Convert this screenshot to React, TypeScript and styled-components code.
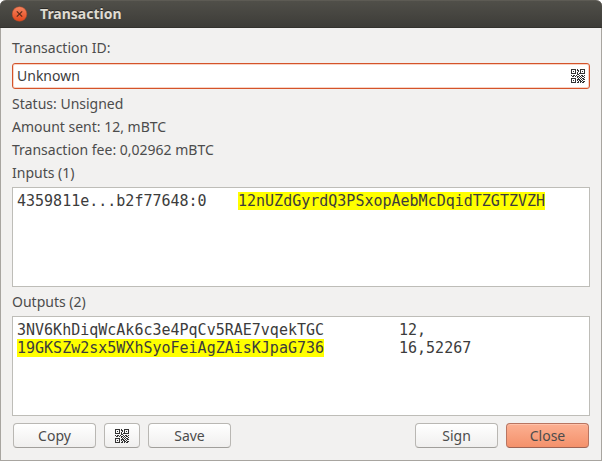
import React from "react";
import styled, { createGlobalStyle } from "styled-components";

const UI_FONT = '"Noto Sans", "Open Sans", sans-serif';
const MONO_FONT = '"DejaVu Sans Mono", monospace';

const GlobalStyle = createGlobalStyle`
  * { box-sizing: border-box; }
  body { margin: 0; background: #ffffff; }
`;

const Window = styled.main`
  display: flex;
  flex-direction: column;
  min-height: 100vh;
  border: 1px solid #a8a5a0;
  border-top: 0;
  border-radius: 6px 6px 0 0;
  background: #f2f1f0;
  color: #4c4c4c;
  font: 14px/23px ${UI_FONT};
`;

const TitleBar = styled.header`
  display: flex;
  align-items: center;
  gap: 12px;
  height: 28px;
  margin: 0 -1px;
  padding: 0 12px;
  border-top: 1px solid #5d5b54;
  border-bottom: 1px solid #33322e;
  border-radius: 6px 6px 0 0;
  background: linear-gradient(#504f49, #3d3c38);
`;

const Title = styled.h1`
  margin: 0;
  color: #dfdbd2;
  font-size: 14px;
  line-height: 20px;
  font-weight: 700;
  text-shadow: 0 -1px #2a2926;
`;

const WindowClose = styled.button`
  display: flex;
  padding: 0;
  border: 0;
  border-radius: 50%;
  background: transparent;
`;

const Content = styled.section`
  display: flex;
  flex: 1;
  flex-direction: column;
  padding: 8px 11px 12px;
`;

const Field = styled.div`
  display: flex;
  align-items: center;
  height: 26px;
  margin: 4px 0 3px;
  padding: 0 4px;
  border: 1px solid #d4532a;
  border-radius: 3px;
  background: #ffffff;
  box-shadow: inset 0 0 0 1px #f9d3c4;
`;

const TextInput = styled.input`
  flex: 1;
  min-width: 0;
  padding: 0;
  border: 0;
  outline: 0;
  background: transparent;
  color: #3c3c3c;
  font: 14px/20px ${UI_FONT};
`;

const IconButton = styled.button`
  display: flex;
  padding: 0;
  border: 0;
  background: transparent;
`;

const Line = styled.p`
  margin: 0;
`;

const Heading = styled.h2<{ $spaced?: boolean }>`
  margin: ${(p) => (p.$spaced ? 3 : 0)}px 0 3px;
  font-size: 14px;
  font-weight: 400;
`;

const Sheet = styled.div`
  flex: 1 0 100px;
  padding: 4px;
  border: 1px solid #bebdb8;
  background: #ffffff;
`;

const Table = styled.table`
  border-collapse: collapse;
  color: #3c3c3c;
  font: 15px/18px ${MONO_FONT};
  white-space: pre;
`;

const Cell = styled.td<{ $width?: number }>`
  min-width: ${(p) => p.$width ?? 0}px;
  padding: 0;
`;

const Own = styled.mark`
  display: inline-block;
  background: #ffff00;
  color: inherit;
  vertical-align: top;
`;

const Actions = styled.footer`
  display: flex;
  gap: 8px;
  margin-top: 7px;
  padding: 0 1px;
`;

const Spacer = styled.div`
  flex: 1;
`;

const Button = styled.button<{ $primary?: boolean; $compact?: boolean }>`
  display: flex;
  align-items: center;
  justify-content: center;
  width: ${(p) => (p.$compact ? 36 : 83)}px;
  height: 25px;
  padding: 0;
  border: 1px solid ${(p) => (p.$primary ? "#b87561" : "#b9b7b3")};
  border-bottom-color: ${(p) => (p.$primary ? "#9e6454" : "#a19f9b")};
  border-radius: 4px;
  background: ${(p) =>
    p.$primary ? "linear-gradient(#fcb092, #f4916b)" : "linear-gradient(#ffffff, #f0efee)"};
  box-shadow: inset 0 1px ${(p) => (p.$primary ? "#ffc2aa" : "#ffffff")};
  color: #4c4c4c;
  font: 14px/20px ${UI_FONT};
`;

const QR_ROWS = [
  "11111010011111",
  "10001011010001",
  "10101001010101",
  "10001010010001",
  "11111010111111",
  "00000011000000",
  "10110100101101",
  "01101011010110",
  "00000010101001",
  "11111001010110",
  "10001011101011",
  "10101010110100",
  "10001001011011",
  "11111011010110",
];

const QR_PATH = QR_ROWS.flatMap((row, y) =>
  [...row].map((bit, x) => (bit === "1" ? `M${x} ${y}h1v1h-1z` : ""))
).join("");

const QrIcon = () => (
  <svg width="14" height="14" viewBox="0 0 14 14" shapeRendering="crispEdges" aria-hidden="true">
    <path d={QR_PATH} fill="#333333" />
  </svg>
);

const CloseIcon = () => (
  <svg width="16" height="16" viewBox="0 0 16 16" aria-hidden="true">
    <defs>
      <linearGradient id="orb" x1="0" y1="0" x2="0" y2="1">
        <stop offset="0" stopColor="#f58560" />
        <stop offset="1" stopColor="#e4471c" />
      </linearGradient>
    </defs>
    <circle cx="7.5" cy="8" r="7.3" fill="url(#orb)" stroke="#b84a27" strokeWidth="0.5" />
    <path d="M4.8 5.3l5.4 5.4M10.2 5.3l-5.4 5.4" stroke="#5a2a18" strokeWidth="1.2" />
  </svg>
);

export default function App() {
  return (
    <>
      <GlobalStyle />
      <Window>
        <TitleBar>
          <WindowClose type="button" aria-label="Close window">
            <CloseIcon />
          </WindowClose>
          <Title>Transaction</Title>
        </TitleBar>
        <Content>
          <label htmlFor="txid">Transaction ID:</label>
          <Field>
            <TextInput id="txid" type="text" defaultValue="Unknown" readOnly />
            <IconButton type="button" aria-label="Show as QR code">
              <QrIcon />
            </IconButton>
          </Field>
          <Line>Status: Unsigned</Line>
          <Line>Amount sent: 12, mBTC</Line>
          <Line>Transaction fee: 0,02962 mBTC</Line>
          <Heading id="inputs">Inputs (1)</Heading>
          <Sheet>
            <Table aria-labelledby="inputs">
              <tbody>
                <tr>
                  <Cell $width={221}>4359811e...b2f77648:0</Cell>
                  <Cell>
                    <Own>12nUZdGyrdQ3PSxopAebMcDqidTZGTZVZH</Own>
                  </Cell>
                </tr>
              </tbody>
            </Table>
          </Sheet>
          <Heading id="outputs" $spaced>
            Outputs (2)
          </Heading>
          <Sheet>
            <Table aria-labelledby="outputs">
              <tbody>
                <tr>
                  <Cell $width={382}>3NV6KhDiqWcAk6c3e4PqCv5RAE7vqekTGC</Cell>
                  <Cell>12,</Cell>
                </tr>
                <tr>
                  <Cell $width={382}>
                    <Own>19GKSZw2sx5WXhSyoFeiAgZAisKJpaG736</Own>
                  </Cell>
                  <Cell>16,52267</Cell>
                </tr>
              </tbody>
            </Table>
          </Sheet>
          <Actions>
            <Button type="button">Copy</Button>
            <Button type="button" $compact aria-label="Show QR code">
              <QrIcon />
            </Button>
            <Button type="button">Save</Button>
            <Spacer />
            <Button type="button">Sign</Button>
            <Button type="button" $primary>
              Close
            </Button>
          </Actions>
        </Content>
      </Window>
    </>
  );
}
